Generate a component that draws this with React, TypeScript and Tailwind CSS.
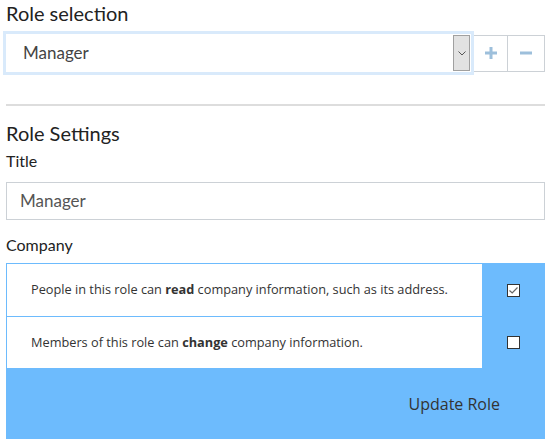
import React from 'react';

const App: React.FC = () => {
    return (
        <div className="w-[551px] h-[444px] bg-white pl-[6px] pr-[6px] text-[#222] font-[family-name:Lato,sans-serif]">
            <h2 className="pt-[1px] text-[20px] leading-[24px] text-[#222]">Role selection</h2>
            <div className="flex items-center mt-[6px] -ml-[3px]">
                <div className="flex items-center w-[471px] h-[44px] border-[3px] border-[#d9eafb] bg-white pl-[17px] pr-[1px]">
                    <span className="flex-1 text-[17px] text-[#444]">Manager</span>
                    <div className="w-[17px] h-[36px] bg-[#e2e2e2] border border-[#a0a0a0] flex items-center justify-center">
                        <svg width="8" height="5" viewBox="0 0 8 5" fill="none" stroke="#555" strokeWidth="1">
                            <path d="M0.5 0.5 L4 4 L7.5 0.5" />
                        </svg>
                    </div>
                </div>
                <button className="w-[34px] h-[37px] border border-l-0 border-[#ccd1d6] flex items-center justify-center">
                    <svg width="14" height="14" viewBox="0 0 14 14">
                        <path d="M7 1 V13 M1 7 H13" stroke="#9dbfdb" strokeWidth="3" />
                    </svg>
                </button>
                <button className="w-[37px] h-[37px] border border-l-0 border-[#ccd1d6] flex items-center justify-center">
                    <svg width="14" height="14" viewBox="0 0 14 14">
                        <path d="M1 7 H13" stroke="#9dbfdb" strokeWidth="3" />
                    </svg>
                </button>
            </div>
            <hr className="mt-[29px] border-0 h-[2px] bg-[#dddddd]" />
            <h2 className="mt-[15px] text-[20px] leading-[24px] text-[#222]">Role Settings</h2>
            <div className="mt-[6px] text-[16px] leading-[20px] text-[#222]">Title</div>
            <div className="mt-[11px] h-[38px] border border-[#ccd1d6] flex items-center pl-[13px] text-[17px] text-[#555]">
                Manager
            </div>
            <div className="mt-[15px] text-[16px] leading-[20px] text-[#222]">Company</div>
            <div className="mt-[8px] h-[176px] bg-[#6dbbfd] flex flex-col font-[family-name:Open_Sans,sans-serif]">
                <div className="flex h-[52px] mt-[1px]">
                    <div className="ml-[1px] w-[475px] bg-white flex items-center pl-[24px] text-[12.75px] text-[#333]">
                        <span>People in this role can <b>read</b> company information, such as its address.</span>
                    </div>
                    <div className="flex-1 flex items-center justify-center">
                        <span className="w-[13px] h-[13px] bg-white border border-[#333] flex items-center justify-center">
                            <svg width="9" height="7" viewBox="0 0 9 7" fill="none" stroke="#666" strokeWidth="1.2">
                                <path d="M0.5 3.5 L3.2 6 L8.5 0.5" />
                            </svg>
                        </span>
                    </div>
                </div>
                <div className="flex h-[51px] mt-[1px]">
                    <div className="ml-[1px] w-[475px] bg-white flex items-center pl-[24px] text-[12.75px] text-[#333]">
                        <span>Members of this role can <b>change</b> company information.</span>
                    </div>
                    <div className="flex-1 flex items-center justify-center">
                        <span className="w-[13px] h-[13px] bg-white border border-[#333]" />
                    </div>
                </div>
                <div className="flex-1 flex items-center justify-end pr-[45px]">
                    <button className="text-[16px] text-[#333]">Update Role</button>
                </div>
            </div>
        </div>
    );
};

export default App;
